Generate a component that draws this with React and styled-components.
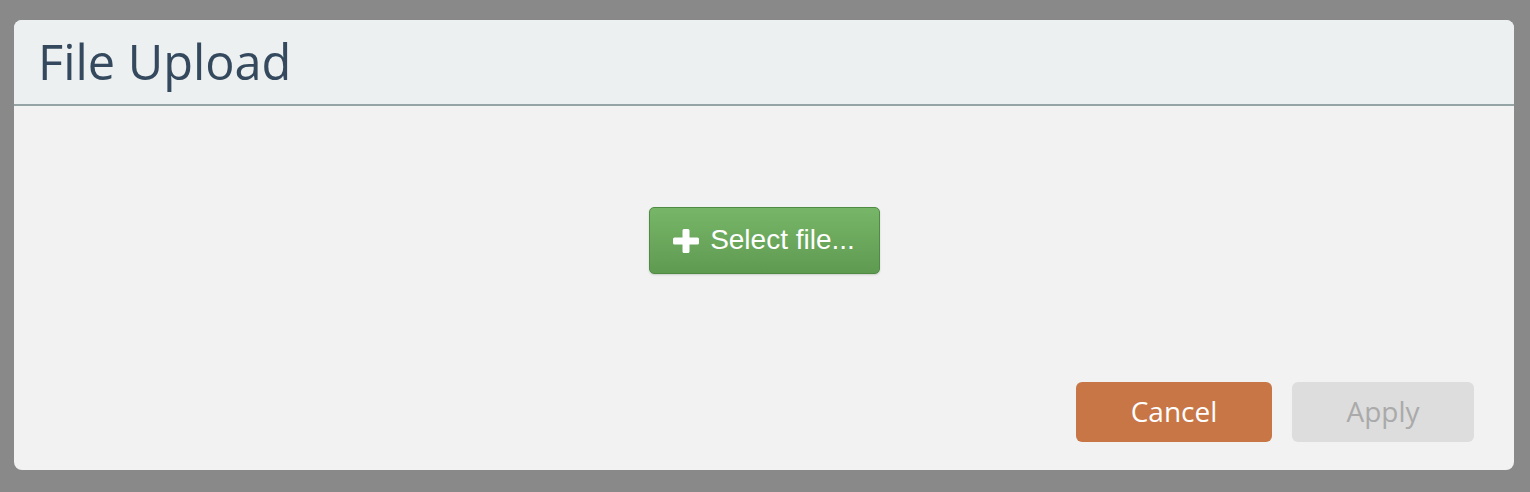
import React from "react";
import styled, { createGlobalStyle } from "styled-components";

const GlobalStyle = createGlobalStyle`
  html, body {
    margin: 0;
    padding: 0;
    background: #898989;
  }
`;

export default function App() {
  return (
    <>
      <GlobalStyle />
      <Page>
        <Dialog>
          <Header>
            <Title>File Upload</Title>
          </Header>
          <Body>
            <UploadArea>
              <SelectButton type="button">
                <PlusIcon width="26" height="24" viewBox="0 0 26 24">
                  <path
                    d="M9.5 1.5a1.5 1.5 0 0 1 1.5-1.5h4a1.5 1.5 0 0 1 1.5 1.5V8.5h8A1.5 1.5 0 0 1 26 10v4a1.5 1.5 0 0 1-1.5 1.5h-8v7a1.5 1.5 0 0 1-1.5 1.5h-4a1.5 1.5 0 0 1-1.5-1.5v-7h-8A1.5 1.5 0 0 1 0 14v-4a1.5 1.5 0 0 1 1.5-1.5h8z"
                    fill="#fff"
                  />
                </PlusIcon>
                Select file...
              </SelectButton>
            </UploadArea>
            <Footer>
              <ActionButton $variant="cancel">Cancel</ActionButton>
              <ActionButton $variant="disabled" disabled>
                Apply
              </ActionButton>
            </Footer>
          </Body>
        </Dialog>
      </Page>
    </>
  );
}

const Page = styled.div`
  padding: 20px 16px 22px 14px;
  height: 492px;
  box-sizing: border-box;
`;

const Dialog = styled.div`
  height: 450px;
  background: #f2f2f2;
  border-radius: 8px;
  overflow: hidden;
  display: flex;
  flex-direction: column;
`;

const Header = styled.div`
  height: 84px;
  background: #ecf0f1;
  border-bottom: 2px solid #95a5a6;
  display: flex;
  align-items: center;
  padding: 0 24px;
`;

const Title = styled.h1`
  margin: -2px 0 0;
  font-family: "Open Sans", sans-serif;
  font-weight: 400;
  font-size: 48.7px;
  color: #34495e;
`;

const Body = styled.div`
  flex: 1;
  display: flex;
  flex-direction: column;
`;

const UploadArea = styled.div`
  flex: 1;
  display: flex;
  justify-content: center;
  padding-top: 101px;
`;

const SelectButton = styled.button`
  width: 231px;
  height: 67px;
  box-sizing: border-box;
  display: flex;
  align-items: center;
  justify-content: center;
  gap: 11px;
  padding: 0 0 2px;
  border: 1px solid #4f8b43;
  border-radius: 5px;
  background: linear-gradient(#77b668, #5f9a51);
  box-shadow: 0 1px 2px rgba(0, 0, 0, 0.15);
  color: #fff;
  font-family: "Liberation Sans", Arial, sans-serif;
  font-size: 28px;
  cursor: pointer;
`;

const PlusIcon = styled.svg`
  flex: none;
  margin-top: 2px;
`;

const Footer = styled.div`
  display: flex;
  justify-content: flex-end;
  gap: 20px;
  padding: 0 40px 28px 0;
`;

const ActionButton = styled.button`
  width: ${(p) => (p.$variant === "cancel" ? "196px" : "182px")};
  height: 60px;
  border: 0;
  border-radius: 6px;
  font-family: "Open Sans", sans-serif;
  font-size: 28px;
  padding: 0 0 2px;
  background: ${(p) => (p.$variant === "cancel" ? "#c87646" : "#dddddd")};
  color: ${(p) => (p.$variant === "cancel" ? "#ffffff" : "#aaaaaa")};
  cursor: ${(p) => (p.$variant === "cancel" ? "pointer" : "default")};
`;
